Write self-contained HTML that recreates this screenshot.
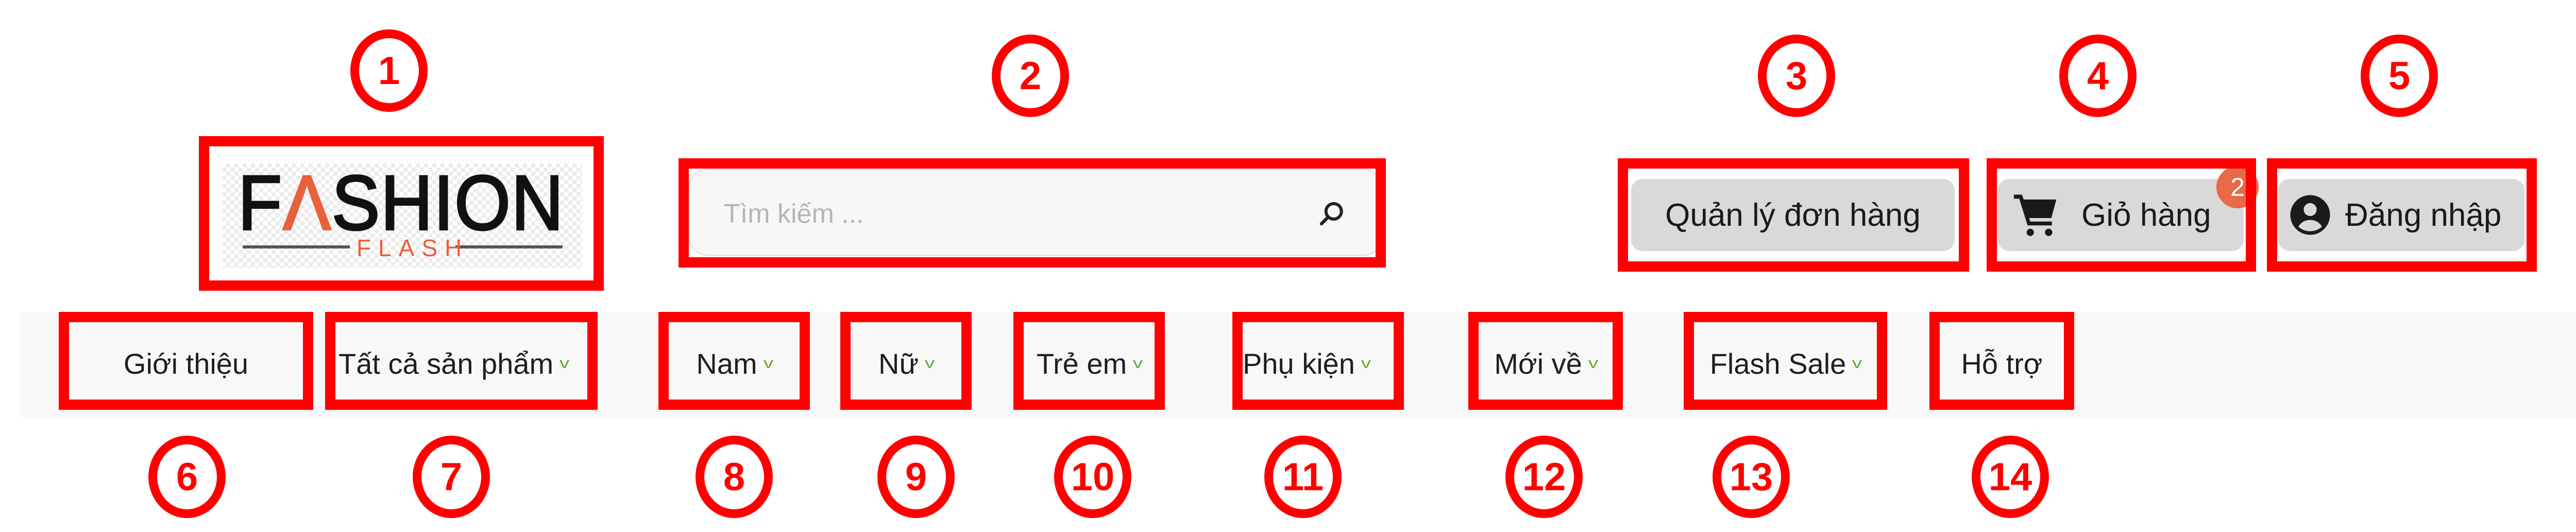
<!DOCTYPE html>
<html><head><meta charset="utf-8"><style>
*{margin:0;padding:0;box-sizing:border-box}
body{width:5124px;height:1032px;background:#fff;position:relative;overflow:hidden;font-family:"Liberation Sans","DejaVu Sans",sans-serif;color:#1e1e1e}
.a{position:absolute}
.box{position:absolute;border:20px solid #ff0000}
.circ{position:absolute;width:150px;height:160px;border:17px solid #ff0000;border-radius:50%;background:#fff;color:#ff0000;font-weight:bold;font-size:76px;display:flex;align-items:center;justify-content:center;transform:translate(-50%,-50%);font-family:"Liberation Sans Narrow","Liberation Sans",sans-serif}
.btn{position:absolute;background:#d9d9d9;border-radius:22px;font-size:62px;display:flex;align-items:center;justify-content:center;color:#1a1a1a}
.nav{position:absolute;top:630px;height:150px;display:flex;align-items:center;justify-content:center;font-size:56px;color:#1e1e1e;white-space:nowrap}
.chev{color:#6aa83a;font-size:30px;margin-left:14px;display:inline-block;transform:scaleX(1.3)}
</style></head><body>
<div class="a" style="left:39px;top:605px;width:5043px;height:205px;background:#f8f8f8"></div>

<div class="a" style="left:431px;top:317px;width:699px;height:203px;background-color:#fff;background-image:linear-gradient(45deg,#ececec 25%,transparent 25%,transparent 75%,#ececec 75%),linear-gradient(45deg,#ececec 25%,transparent 25%,transparent 75%,#ececec 75%);background-size:16px 16px;background-position:0 0,8px 8px"></div>
<div class="a" style="left:462px;top:318px;font-size:150px;line-height:150px;letter-spacing:2px;color:#111;-webkit-text-stroke:4px #111;transform:scaleX(0.93);transform-origin:0 0">F<span style="color:#e8603c;-webkit-text-stroke:4px #e8603c">Λ</span>SHION</div>
<div class="a" style="left:471px;top:476px;width:208px;height:6px;background:#555"></div>
<div class="a" style="left:884px;top:476px;width:208px;height:6px;background:#555"></div>
<div class="a" style="left:692px;top:458px;font-size:46px;line-height:46px;letter-spacing:14px;color:#e8603c">FLASH</div>

<div class="a" style="left:1335px;top:327px;width:1350px;height:170px;background:#f7f7f7;border:3px solid #e6e6e6;border-radius:40px"></div>
<div class="a" style="left:1405px;top:385px;font-size:52px;color:#b5b5b5">Tìm kiếm ...</div>
<svg class="a" style="left:2555px;top:385px" width="60" height="60" viewBox="0 0 24 24"><circle cx="13.5" cy="10" r="6" fill="none" stroke="#222" stroke-width="2.4"/><path d="M9.3 14.3L4 19.6" stroke="#222" stroke-width="2.6" stroke-linecap="round"/></svg>

<div class="btn" style="left:3166px;top:347px;width:628px;height:140px">Quản lý đơn hàng</div>
<div class="btn" style="left:3878px;top:347px;width:477px;height:140px;justify-content:flex-start;padding-left:26px">
<svg width="96" height="90" viewBox="0 0 24 24"><path d="M0.5 1.5h4.2l.9 2.5h16.9l-2.6 9.6H8.4l.6 1.8h11.2v2H7.6L3.3 3.6H0.5z" fill="#1a1a1a"/><circle cx="9" cy="21" r="1.9" fill="#1a1a1a"/><circle cx="18.5" cy="21" r="1.9" fill="#1a1a1a"/></svg>
<span style="margin-left:40px">Giỏ hàng</span></div>
<div class="a" style="left:4302px;top:322px;width:82px;height:82px;border-radius:50%;background:#e86a48;color:#fff;font-size:50px;display:flex;align-items:center;justify-content:center">2</div>
<div class="btn" style="left:4422px;top:347px;width:478px;height:140px;justify-content:flex-start;padding-left:20px">
<svg width="84" height="92" viewBox="0 0 24 24"><circle cx="12" cy="12" r="11" fill="#1a1a1a"/><circle cx="12" cy="9" r="3.6" fill="#d9d9d9"/><path d="M5.5 18.5c1.5-2.6 3.8-3.7 6.5-3.7s5 1.1 6.5 3.7c-1.7 1.6-4 2.5-6.5 2.5s-4.8-.9-6.5-2.5z" fill="#d9d9d9"/></svg>
<span style="margin-left:26px">Đăng nhập</span></div>

<div class="nav" style="left:134px;width:454px">Giới thiệu</div>
<div class="nav" style="left:651px;width:509px;justify-content:flex-start;padding-left:6px">Tất cả sản phẩm<span class="chev">v</span></div>
<div class="nav" style="left:1298px;width:254px">Nam<span class="chev">v</span></div>
<div class="nav" style="left:1651px;width:215px">Nữ<span class="chev">v</span></div>
<div class="nav" style="left:1987px;width:254px">Trẻ em<span class="chev">v</span></div>
<div class="nav" style="left:2412px;width:313px;justify-content:flex-start">Phụ kiện<span class="chev">v</span></div>
<div class="nav" style="left:2870px;width:260px">Mới về<span class="chev">v</span></div>
<div class="nav" style="left:3288px;width:355px">Flash Sale<span class="chev">v</span></div>
<div class="nav" style="left:3765px;width:241px">Hỗ trợ</div>

<div class="box" style="left:386px;top:264px;width:786px;height:300px"></div>
<div class="box" style="left:1317px;top:307px;width:1373px;height:212px"></div>
<div class="box" style="left:3140px;top:307px;width:682px;height:220px"></div>
<div class="box" style="left:3856px;top:307px;width:523px;height:220px"></div>
<div class="box" style="left:4400px;top:307px;width:524px;height:220px"></div>

<div class="box" style="left:114px;top:605px;width:494px;height:190px"></div>
<div class="box" style="left:631px;top:605px;width:529px;height:190px"></div>
<div class="box" style="left:1278px;top:605px;width:294px;height:190px"></div>
<div class="box" style="left:1631px;top:605px;width:255px;height:190px"></div>
<div class="box" style="left:1967px;top:605px;width:294px;height:190px"></div>
<div class="box" style="left:2392px;top:605px;width:333px;height:190px"></div>
<div class="box" style="left:2850px;top:605px;width:300px;height:190px"></div>
<div class="box" style="left:3268px;top:605px;width:395px;height:190px"></div>
<div class="box" style="left:3745px;top:605px;width:281px;height:190px"></div>

<div class="circ" style="left:755px;top:137px">1</div>
<div class="circ" style="left:2000px;top:147px">2</div>
<div class="circ" style="left:3487px;top:147px">3</div>
<div class="circ" style="left:4072px;top:147px">4</div>
<div class="circ" style="left:4657px;top:147px">5</div>
<div class="circ" style="left:363px;top:925px">6</div>
<div class="circ" style="left:876px;top:925px">7</div>
<div class="circ" style="left:1425px;top:925px">8</div>
<div class="circ" style="left:1778px;top:925px">9</div>
<div class="circ" style="left:2121px;top:925px">10</div>
<div class="circ" style="left:2529px;top:925px">11</div>
<div class="circ" style="left:2997px;top:925px">12</div>
<div class="circ" style="left:3399px;top:925px">13</div>
<div class="circ" style="left:3902px;top:925px">14</div>
</body></html>
